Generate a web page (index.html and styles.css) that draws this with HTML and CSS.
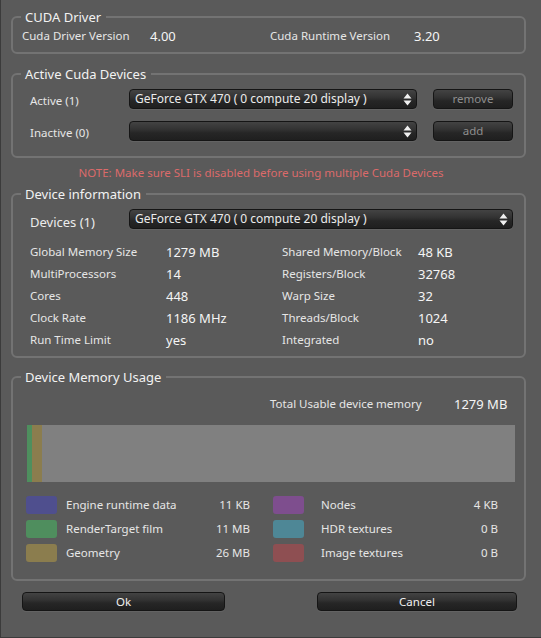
FILE: index.html
```html
<!DOCTYPE html>
<html>
<head>
<meta charset="utf-8">
<link rel="stylesheet" href="styles.css">
</head>
<body>
<div class="window">
  <fieldset class="group">
    <legend>CUDA Driver</legend>
    <div class="driver-grid">
      <span class="label">Cuda Driver Version</span><span class="value">4.00</span>
      <span class="label">Cuda Runtime Version</span><span class="value">3.20</span>
    </div>
  </fieldset>

  <fieldset class="group g-active">
    <legend>Active Cuda Devices</legend>
    <div class="rows">
      <div class="device-row">
        <span class="label row-label">Active (1)</span>
        <div class="select sel-short"><span class="sel-text">GeForce GTX 470 ( 0 compute 20 display )</span>
          <svg class="arrows" width="9" height="13" viewBox="0 0 9 13"><path d="M0.5 5.5 L4.5 0.5 L8.5 5.5 Z M0.5 7.5 L4.5 12.5 L8.5 7.5 Z" fill="#f0f0f0"/></svg>
        </div>
        <button class="btn btn-small">remove</button>
      </div>
      <div class="device-row">
        <span class="label row-label">Inactive (0)</span>
        <div class="select sel-short"><span class="sel-text"></span>
          <svg class="arrows" width="9" height="13" viewBox="0 0 9 13"><path d="M0.5 5.5 L4.5 0.5 L8.5 5.5 Z M0.5 7.5 L4.5 12.5 L8.5 7.5 Z" fill="#f0f0f0"/></svg>
        </div>
        <button class="btn btn-small">add</button>
      </div>
    </div>
  </fieldset>

  <p class="note">NOTE: Make sure SLI is disabled before using multiple Cuda Devices</p>

  <fieldset class="group g-info">
    <legend>Device information</legend>
    <div class="device-row">
      <span class="big-label">Devices (1)</span>
      <div class="select sel-long"><span class="sel-text">GeForce GTX 470 ( 0 compute 20 display )</span>
        <svg class="arrows" width="9" height="13" viewBox="0 0 9 13"><path d="M0.5 5.5 L4.5 0.5 L8.5 5.5 Z M0.5 7.5 L4.5 12.5 L8.5 7.5 Z" fill="#f0f0f0"/></svg>
      </div>
    </div>
    <div class="info-grid">
      <span class="label">Global Memory Size</span><span class="value">1279 MB</span>
      <span class="label">Shared Memory/Block</span><span class="value">48 KB</span>
      <span class="label">MultiProcessors</span><span class="value">14</span>
      <span class="label">Registers/Block</span><span class="value">32768</span>
      <span class="label">Cores</span><span class="value">448</span>
      <span class="label">Warp Size</span><span class="value">32</span>
      <span class="label">Clock Rate</span><span class="value">1186 MHz</span>
      <span class="label">Threads/Block</span><span class="value">1024</span>
      <span class="label">Run Time Limit</span><span class="value">yes</span>
      <span class="label">Integrated</span><span class="value">no</span>
    </div>
  </fieldset>

  <fieldset class="group g-mem">
    <legend>Device Memory Usage</legend>
    <div class="total">
      <span class="label total-label">Total Usable device memory</span>
      <span class="value">1279 MB</span>
    </div>
    <div class="bar">
      <div class="seg seg-green" style="width:5px"></div>
      <div class="seg seg-olive" style="width:10px"></div>
    </div>
    <div class="mem-legend">
      <span class="swatch c-engine"></span><span class="label lab-l">Engine runtime data</span><span class="label amount">11 KB</span>
      <span class="swatch c-nodes sw-r"></span><span class="label lab-r">Nodes</span><span class="label amount">4 KB</span>
      <span class="swatch c-render"></span><span class="label lab-l">RenderTarget film</span><span class="label amount">11 MB</span>
      <span class="swatch c-hdr sw-r"></span><span class="label lab-r">HDR textures</span><span class="label amount">0 B</span>
      <span class="swatch c-geom"></span><span class="label lab-l">Geometry</span><span class="label amount">26 MB</span>
      <span class="swatch c-image sw-r"></span><span class="label lab-r">Image textures</span><span class="label amount">0 B</span>
    </div>
  </fieldset>

  <div class="footer">
    <button class="btn btn-ok">Ok</button>
    <button class="btn btn-cancel">Cancel</button>
  </div>
</div>
</body>
</html>
```

FILE: styles.css
```css
html, body {
  margin: 0;
  padding: 0;
  background: #5a5a5a;
}

.window {
  width: 541px;
  height: 638px;
  box-sizing: border-box;
  background: #5a5a5a;
  border-left: 1px solid #3b3b3b;
  border-bottom: 1px solid #3b3b3b;
  padding: 9px 0 0 10px;
  font-family: "Noto Sans", "DejaVu Sans", sans-serif;
  color: #e6e6e6;
  overflow: hidden;
}

.group {
  margin: 0;
  padding: 0;
  width: 515px;
  min-width: 0;
  box-sizing: border-box;
  border: 2px solid #737373;
  border-radius: 6px;
}

.group legend {
  margin-left: 8px;
  padding: 0 5px 0 4px;
  font-size: 13px;
  line-height: 16px;
  color: #f2f2f2;
}

.label {
  font-size: 11.5px;
  line-height: 16px;
  color: #e6e6e6;
  white-space: nowrap;
}

.value {
  font-size: 13px;
  line-height: 16px;
  color: #f5f5f5;
  white-space: nowrap;
}

/* CUDA Driver */
.driver-grid {
  display: grid;
  grid-template-columns: 128px 120px 144px auto;
  align-items: center;
  padding: 3px 0 8px 9px;
}

/* Active devices */
.g-active {
  margin-top: 12px;
}

.rows {
  display: flex;
  flex-direction: column;
  gap: 12px;
  padding: 7px 0 15px 17px;
}

.device-row {
  display: flex;
  align-items: center;
  height: 20px;
}

.row-label {
  width: 99px;
  padding-top: 3px;
}

.big-label {
  width: 99px;
  font-size: 13px;
  line-height: 16px;
  color: #ececec;
  padding-top: 5px;
}

.select {
  box-sizing: border-box;
  height: 20px;
  display: flex;
  align-items: center;
  justify-content: space-between;
  padding: 0 4px 0 5px;
  border: 1px solid #151515;
  border-radius: 4px;
  background: linear-gradient(#434343 0%, #333 40%, #262626 60%, #1f1f1f 100%);
  box-shadow: 0 1px 0 rgba(255, 255, 255, 0.06);
}

.sel-short {
  width: 288px;
}

.sel-long {
  width: 384px;
}

.sel-text {
  font-size: 12px;
  line-height: 16px;
  color: #ececec;
  white-space: nowrap;
}

.arrows {
  display: block;
  flex: none;
}

.btn {
  box-sizing: border-box;
  margin: 0;
  padding: 0;
  border: 1px solid #151515;
  border-radius: 4px;
  background: linear-gradient(#434343 0%, #333 40%, #262626 60%, #1f1f1f 100%);
  box-shadow: 0 1px 0 rgba(255, 255, 255, 0.06);
  font-family: "Noto Sans", "DejaVu Sans", sans-serif;
  font-size: 11.5px;
  line-height: 16px;
  color: #f0f0f0;
}

.btn-small {
  width: 80px;
  height: 20px;
  margin-left: 16px;
  color: #8e8e8e;
}

/* note */
.note {
  margin: 7px 0 0;
  width: 500px;
  text-align: center;
  font-size: 11.5px;
  line-height: 16px;
  color: #dc6a6a;
}

/* device information */
.g-info {
  margin-top: 5px;
}

.g-info .device-row {
  padding: 7px 0 0 17px;
}

.info-grid {
  display: grid;
  grid-template-columns: 136px 116px 136px auto;
  grid-auto-rows: 22px;
  align-items: center;
  margin-top: 12px;
  padding: 0 0 5px 17px;
}

/* memory usage */
.g-mem {
  margin-top: 11px;
  padding: 11px 9px 17px 14px;
}

.g-mem legend {
  margin-left: -6px;
}

.total {
  display: flex;
  align-items: center;
  height: 16px;
  padding-left: 243px;
}

.total-label {
  width: 184px;
}

.bar {
  display: flex;
  margin-top: 13px;
  height: 57px;
  background: #808080;
}

.seg-green {
  background: #4e8f5e;
}

.seg-olive {
  background: #8b7d4e;
}

.mem-legend {
  display: grid;
  grid-template-columns: 31px 142px 51px 54px 144px 50px;
  grid-auto-rows: 18px;
  row-gap: 6px;
  align-items: center;
  margin-top: 14px;
  margin-left: -1px;
}

.swatch {
  width: 31px;
  height: 18px;
  border-radius: 3px;
}

.sw-r {
  justify-self: end;
}

.lab-l {
  padding-left: 9px;
}

.lab-r {
  padding-left: 17px;
}

.amount {
  text-align: right;
}

.c-engine { background: #4f4f8e; }
.c-render { background: #4f8e5e; }
.c-geom   { background: #8b7d4e; }
.c-nodes  { background: #7e4e8e; }
.c-hdr    { background: #4e8796; }
.c-image  { background: #8e4f52; }

/* footer */
.footer {
  display: flex;
  margin-top: 11px;
  padding-left: 11px;
}

.btn-ok {
  width: 203px;
  height: 19px;
}

.btn-cancel {
  width: 200px;
  height: 19px;
  margin-left: 92px;
}
```
